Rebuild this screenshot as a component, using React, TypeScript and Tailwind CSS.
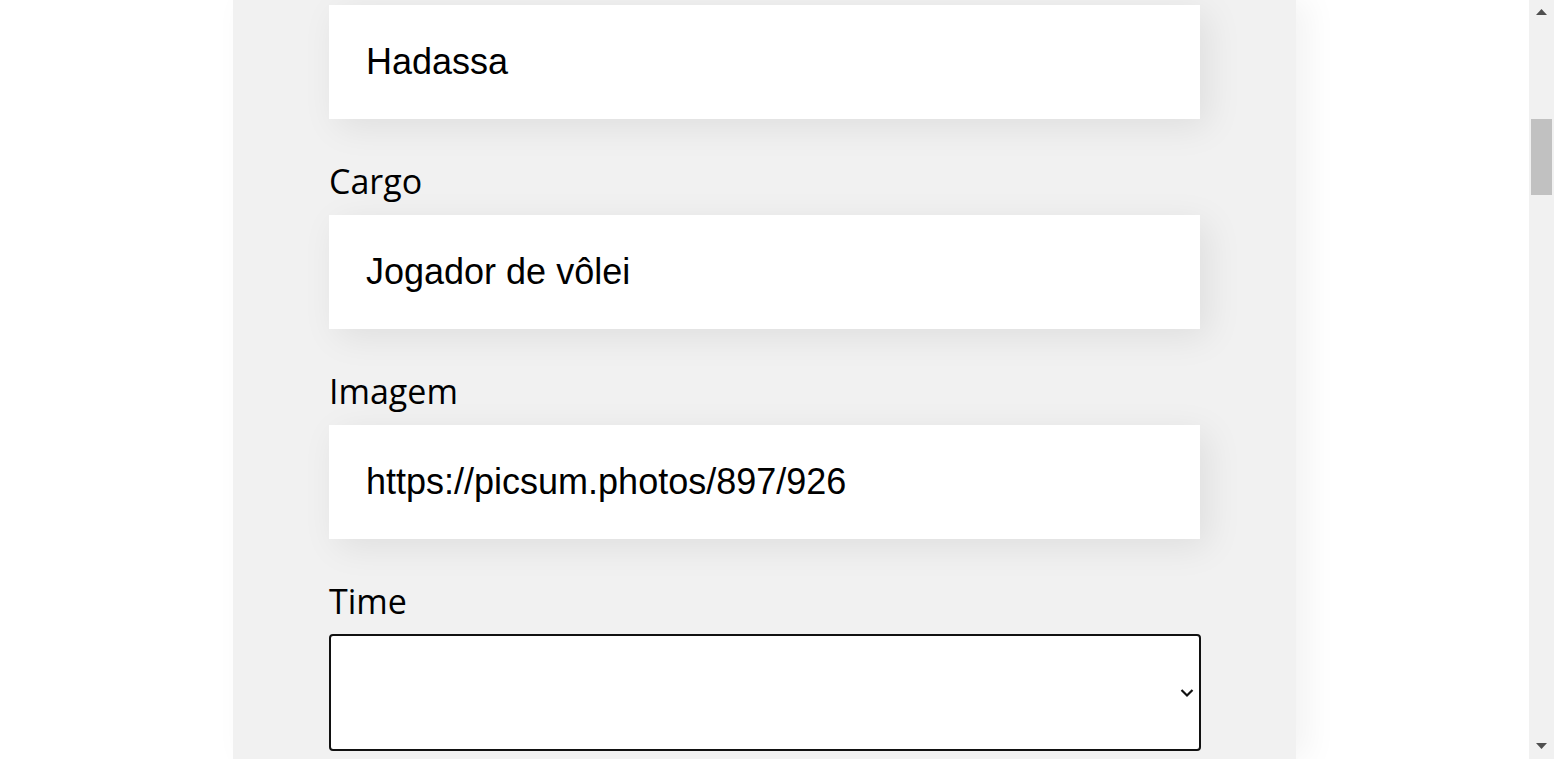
import React from 'react';

const fields = [
  { label: 'Cargo', value: 'Jogador de vôlei' },
  { label: 'Imagem', value: 'https://picsum.photos/897/926' },
];

function TextField({ value }: { value: string }) {
  return (
    <input
      type="text"
      defaultValue={value}
      className="block w-full h-[114px] bg-white pl-[37px] pr-4 text-[36px] text-black outline-none shadow-[8px_8px_34px_rgba(0,0,0,0.08)] font-['Liberation_Sans',Arial,sans-serif]"
    />
  );
}

function Label({ children }: { children: React.ReactNode }) {
  return (
    <label className="block mt-[42px] mb-[14px] h-[40px] leading-[40px] text-[34px] text-black font-['Open_Sans','Noto_Sans',sans-serif]">
      {children}
    </label>
  );
}

function Scrollbar() {
  return (
    <div className="w-[25px] h-full flex flex-col bg-[#f1f1f1] shrink-0">
      <div className="h-[25px] flex items-center justify-center">
        <svg width="11" height="7" viewBox="0 0 11 7">
          <path d="M5.5 0 L11 6 L0 6 Z" fill="#505050" />
        </svg>
      </div>
      <div className="h-[94px]" />
      <div className="h-[76px] mx-[2px] bg-[#c1c1c1]" />
      <div className="flex-1" />
      <div className="h-[25px] flex items-center justify-center">
        <svg width="11" height="7" viewBox="0 0 11 7">
          <path d="M0 0 L11 0 L5.5 6 Z" fill="#505050" />
        </svg>
      </div>
    </div>
  );
}

export default function App() {
  return (
    <div className="h-[759px] w-full flex bg-white overflow-hidden">
      <div className="flex-1 flex justify-center">
        <div className="w-[1063px] h-full bg-[#f1f1f1] px-24 pt-[5px] shadow-[12px_0_30px_rgba(0,0,0,0.05)]">
          <TextField value="Hadassa" />
          {fields.map((f) => (
            <div key={f.label}>
              <Label>{f.label}</Label>
              <TextField value={f.value} />
            </div>
          ))}
          <Label>Time</Label>
          <div className="relative -mt-[1px] w-[872px]">
            <select className="block w-full h-[117px] appearance-none bg-white border-2 border-[#111] rounded-[4px] text-[36px] outline-none font-['Liberation_Sans',Arial,sans-serif]">
              <option></option>
            </select>
            <svg
              className="absolute right-[7px] top-1/2 -translate-y-1/2 pointer-events-none"
              width="14"
              height="9"
              viewBox="0 0 14 9"
            >
              <path d="M1.5 1.5 L7 7 L12.5 1.5" fill="none" stroke="#111" strokeWidth="2.2" />
            </svg>
          </div>
        </div>
      </div>
      <Scrollbar />
    </div>
  );
}
